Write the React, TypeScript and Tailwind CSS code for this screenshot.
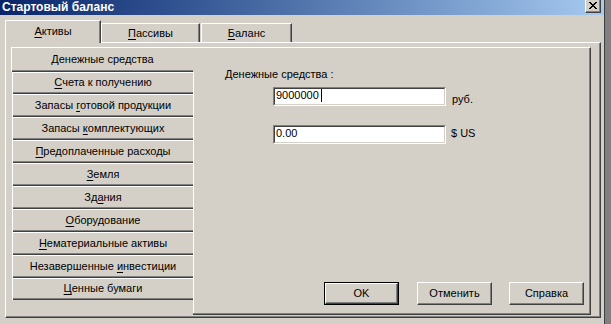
import React from "react";

const FONT = { fontFamily: '"Liberation Sans", Arial, sans-serif' };

function U({ children }: { children: React.ReactNode }) {
  return <span className="underline decoration-1 underline-offset-2">{children}</span>;
}

type Item = { a: string; u: string; b: string; h: string };

const items: Item[] = [
  { a: "", u: "С", b: "чета к получению", h: "h-[22px]" },
  { a: "Запасы ", u: "г", b: "отовой продукции", h: "h-[23px]" },
  { a: "Запасы ", u: "к", b: "омплектующих", h: "h-[23px]" },
  { a: "", u: "П", b: "редоплаченные расходы", h: "h-[23px]" },
  { a: "", u: "З", b: "емля", h: "h-[23px]" },
  { a: "Зд", u: "а", b: "ния", h: "h-[23px]" },
  { a: "", u: "О", b: "борудование", h: "h-[23px]" },
  { a: "", u: "Н", b: "ематериальные активы", h: "h-[23px]" },
  { a: "Незавершенные ", u: "и", b: "нвестиции", h: "h-[23px]" },
  { a: "", u: "Ц", b: "енные бумаги", h: "h-[22px]" },
];

function Edit({ value, caret }: { value: string; caret?: boolean }) {
  return (
    <div className="w-[173px] h-[19px] border-t border-l border-t-[#808080] border-l-[#808080] border-b border-r border-b-white border-r-white">
      <div className="h-full bg-white border-t border-l border-t-[#404040] border-l-[#404040] border-b border-r border-b-[#d4d0c8] border-r-[#d4d0c8] pl-[1px] flex items-start leading-[13px]">
        <span>{value}</span>
        {caret && <span className="inline-block w-px h-[13px] bg-black ml-[2px]" />}
      </div>
    </div>
  );
}

function Btn({ label, def, cls }: { label: string; def?: boolean; cls?: string }) {
  if (def) {
    return (
      <div className={`w-[75px] h-[23px] border border-black ${cls ?? ""}`}>
        <div className="h-full border border-t-white border-l-white border-b-[#404040] border-r-[#404040] shadow-[inset_-1px_-1px_0_#808080] flex items-center justify-center pb-[1px] leading-[13px]">
          {label}
        </div>
      </div>
    );
  }
  return (
    <div
      className={`w-[75px] h-[23px] border border-t-white border-l-white border-b-[#404040] border-r-[#404040] shadow-[inset_-1px_-1px_0_#808080] flex items-center justify-center pb-[1px] leading-[13px] ${cls ?? ""}`}
    >
      {label}
    </div>
  );
}

export default function App() {
  return (
    <div
      className="w-[611px] h-[324px] bg-[#d4d0c8] flex text-[11px] text-black overflow-hidden"
      style={FONT}
    >
      <div className="w-[604px] flex flex-col">
        {/* Title bar */}
        <div className="h-[15px] bg-linear-to-r from-[#0a246a] to-[#a6caf0] flex items-start">
          <div className="pl-[2px] pt-[1px] leading-[13px] text-white font-bold text-[12px]">
            Стартовый баланс
          </div>
          <div className="ml-auto mr-[3px] w-[16px] h-[13px] bg-[#d4d0c8] border-l border-l-white border-r border-r-[#404040] border-b border-b-[#404040] shadow-[inset_-1px_-1px_0_#808080] pl-[3px] pt-[2px]">
            <svg width="8" height="7" viewBox="0 0 8 7" shapeRendering="crispEdges" className="block">
              <path
                d="M0 0h2v1H0zM6 0h2v1H6zM1 1h2v1H1zM5 1h2v1H5zM2 2h4v1H2zM3 3h2v1H3zM2 4h4v1H2zM1 5h2v1H1zM5 5h2v1H5zM0 6h2v1H0zM6 6h2v1H6z"
                fill="#000"
              />
            </svg>
          </div>
        </div>

        {/* Tabs row */}
        <div className="h-[27px] flex items-end pl-[5px]">
          <div className="relative z-10 -mb-px w-[96px] h-[23px] bg-[#d4d0c8] border-t border-l border-t-white border-l-white border-r border-r-[#404040] shadow-[inset_-1px_0_0_#808080] flex items-center justify-center pb-[1px] leading-[13px]">
            <span>
              <U>А</U>ктивы
            </span>
          </div>
          <div className="w-[99px] h-[19px] border-t border-l border-t-white border-l-white border-r border-r-[#404040] shadow-[inset_-1px_0_0_#808080] flex items-center justify-center leading-[13px]">
            <span>
              <U>П</U>ассивы
            </span>
          </div>
          <div className="ml-[1px] w-[91px] h-[19px] border-t border-l border-t-white border-l-white border-r border-r-[#404040] shadow-[inset_-1px_0_0_#808080] flex items-center justify-center leading-[13px]">
            <span>
              <U>Б</U>аланс
            </span>
          </div>
        </div>

        {/* Tab panel */}
        <div className="ml-[5px] w-[596px] h-[276px] border-t border-l border-t-white border-l-white border-r border-b border-r-[#404040] border-b-[#404040] shadow-[inset_-1px_-1px_0_#808080] pl-[5px] pt-[4px] pr-[9px] pb-[2px] flex">
          {/* Left vertical list */}
          <div className="w-[182px] flex flex-col">
            <div className="h-[25px] flex flex-col border-t border-l border-white">
              <div className="flex-1 flex items-center justify-center leading-[13px]">
                <span>
                  <U>Д</U>енежные средства
                </span>
              </div>
              <div className="h-px bg-[#808080]" />
              <div className="h-px bg-[#404040]" />
            </div>
            {items.map((it, i) => (
              <div key={i} className={`ml-[1px] ${it.h} flex flex-col border-t border-l border-white`}>
                <div className="flex-1 flex items-center justify-center leading-[13px]">
                  <span>
                    {it.a}
                    <U>{it.u}</U>
                    {it.b}
                  </span>
                </div>
                <div className="h-px bg-[#808080]" />
                <div className="h-px bg-[#404040]" />
              </div>
            ))}
          </div>

          {/* Right page */}
          <div className="relative w-[398px] border-t border-t-white border-r border-b border-r-[#404040] border-b-[#404040] shadow-[inset_-1px_-1px_0_#808080] flex flex-col">
            <div className="absolute left-0 top-[24px] bottom-[1px] w-px bg-white" />
            <div className="pt-[20px] pl-[32px] leading-[13px]">Денежные средства :</div>
            <div className="flex items-start mt-[6px] pl-[80px]">
              <Edit value="9000000" caret />
              <div className="ml-[6px] mt-[6px] leading-[13px]">руб.</div>
            </div>
            <div className="flex items-start mt-[19px] pl-[80px]">
              <Edit value="0.00" />
              <div className="ml-[5px] mt-[2px] leading-[13px]">$ US</div>
            </div>
            <div className="flex-1" />
            <div className="flex pl-[131px] pb-[9px]">
              <Btn label="OK" def />
              <Btn label="Отменить" cls="ml-[18px]" />
              <Btn label="Справка" cls="ml-[17px]" />
            </div>
          </div>
        </div>
        <div className="flex-1" />
      </div>
      {/* right window edge */}
      <div className="w-[7px] h-full border-l border-l-[#404040] bg-[#808080]" />
    </div>
  );
}
